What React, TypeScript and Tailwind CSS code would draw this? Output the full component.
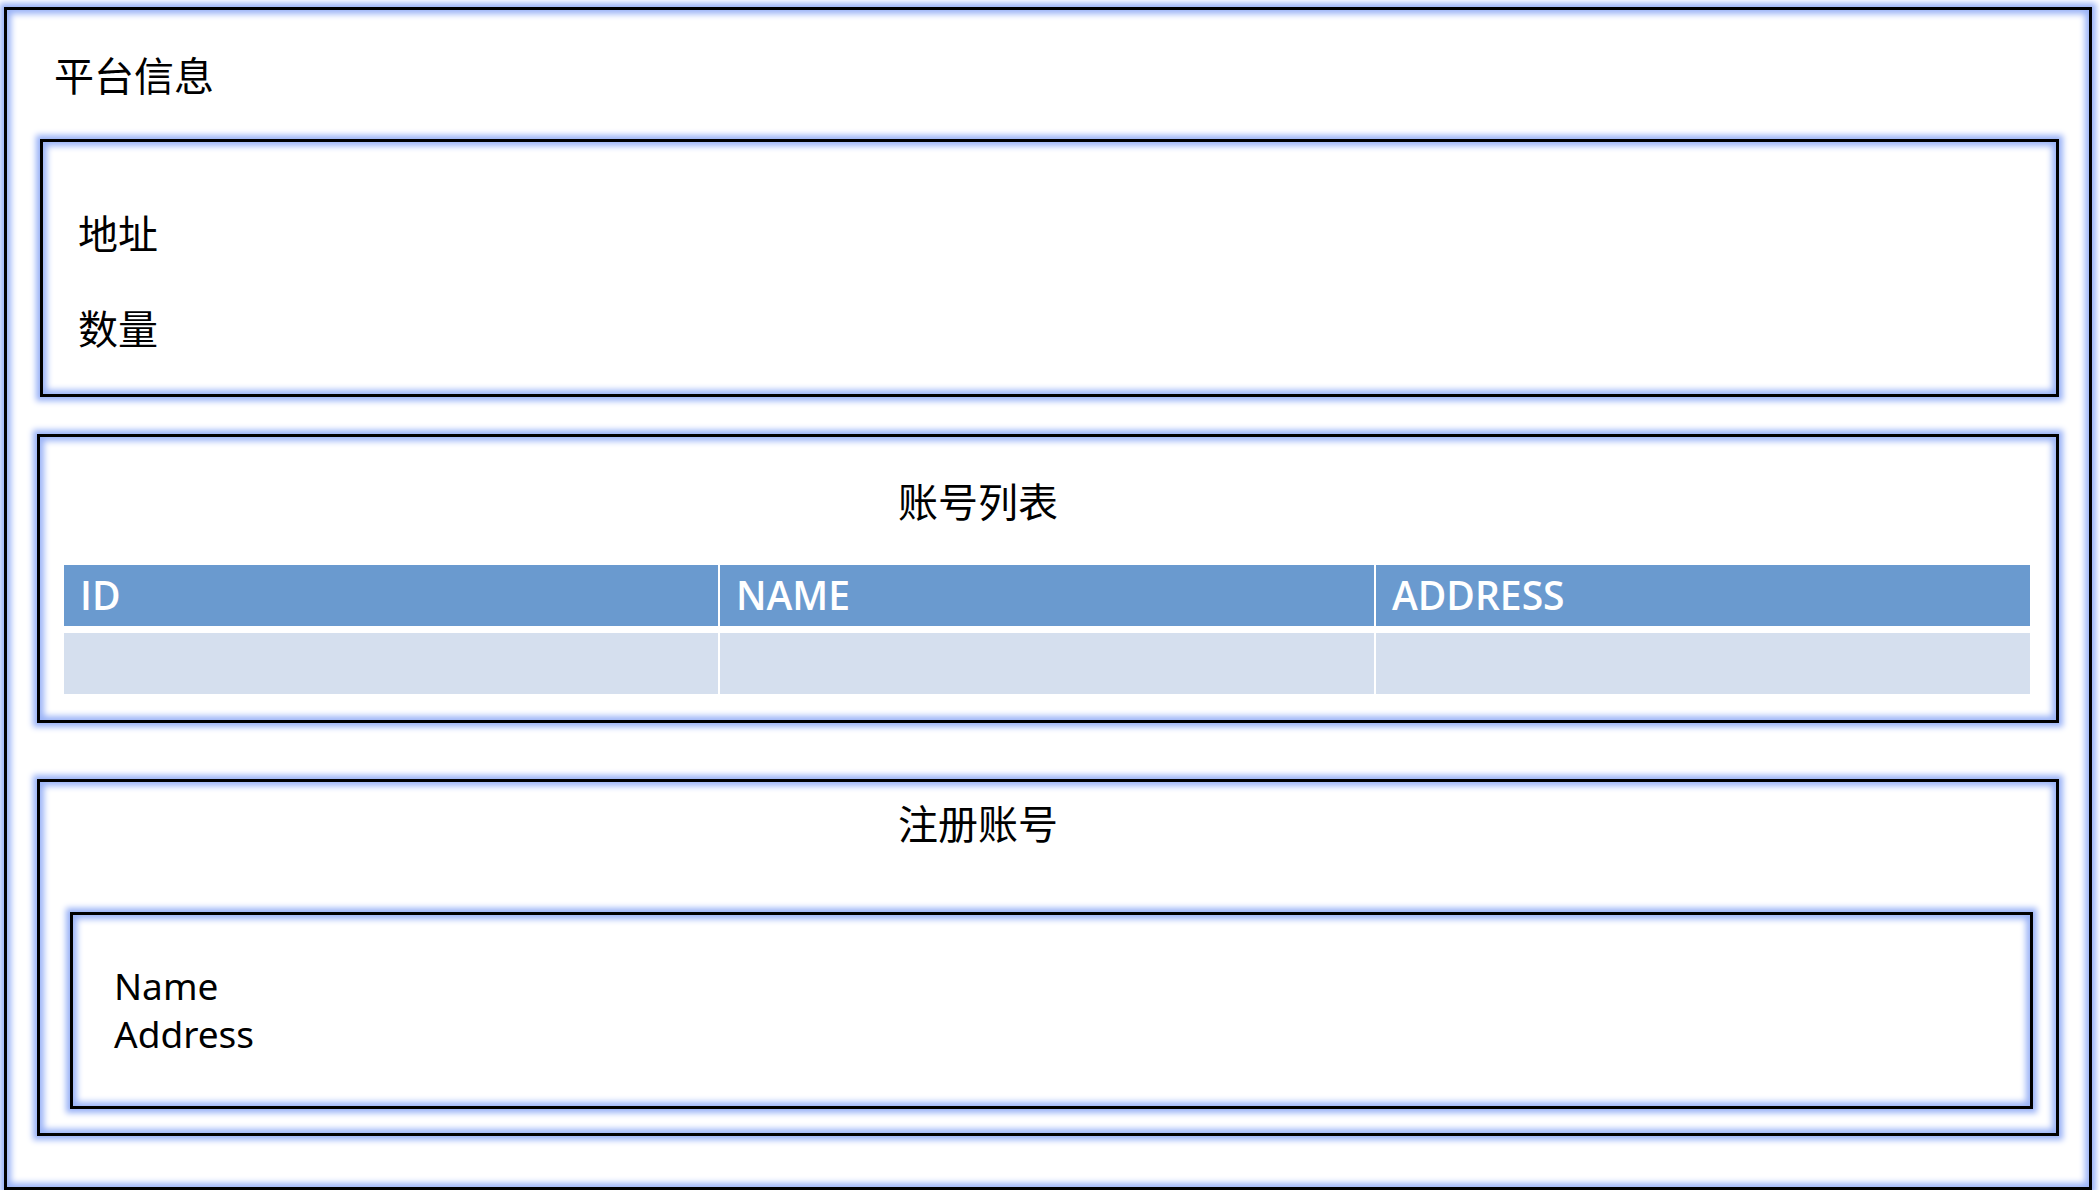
const cjk = "font-['Noto_Sans_CJK_SC',sans-serif]";
const glow =
  "border-[3px] border-black bg-white shadow-[0_0_6px_4px_#9ab3f7,inset_0_0_6px_4px_#9ab3f7]";

const columns = ["ID", "NAME", "ADDRESS"];

function SectionTitle({ text, className = "" }: { text: string; className?: string }) {
  return (
    <h2 className={`${cjk} text-center text-[40px] leading-[40px] text-black ${className}`}>
      {text}
    </h2>
  );
}

export default function App() {
  return (
    <div className="w-[2100px] h-[1190px] overflow-hidden bg-white pt-[7px] pl-[4px] pr-[8px]">
      <div className={`h-[1183px] ${glow} pt-[44px]`}>
        <h1 className={`${cjk} pl-[47px] text-[40px] leading-[40px] text-black`}>平台信息</h1>

        {/* platform info */}
        <section className={`mt-[45px] ml-[33px] mr-[30px] ${glow} pt-[70px] pb-[47px] pl-[35px]`}>
          <p className={`${cjk} text-[40px] leading-[40px]`}>地址</p>
          <p className={`${cjk} mt-[55px] text-[40px] leading-[40px]`}>数量</p>
        </section>

        {/* account list */}
        <section className={`mt-[37px] mx-[30px] ${glow} pt-[43px] pb-[26px] pl-[24px] pr-[26px]`}>
          <SectionTitle text="账号列表" className="pr-[138px]" />
          <div className="mt-[45px] grid grid-cols-3 gap-x-[2px] gap-y-[7px] font-['Open_Sans',sans-serif]">
            {columns.map((c) => (
              <div
                key={c}
                className="h-[61px] bg-[#6a9acf] flex items-center px-[16px] text-[39px] font-semibold text-white"
              >
                {c}
              </div>
            ))}
            {columns.map((c) => (
              <div key={c + "-row"} className="h-[61px] bg-[#d5dfee]" />
            ))}
          </div>
        </section>

        {/* register */}
        <section className={`mt-[56px] mx-[30px] ${glow} pt-[20px] pb-[24px]`}>
          <SectionTitle text="注册账号" className="pr-[140px]" />
          <div className={`mt-[70px] ml-[30px] mr-[23px] ${glow} pt-[47px] pb-[48px] pl-[41px]`}>
            <div className="font-['Noto_Sans','Noto_Sans_CJK_SC',sans-serif] text-[37px] leading-[48px] text-black">
              <div>Name</div>
              <div>Address</div>
            </div>
          </div>
        </section>
      </div>
    </div>
  );
}
